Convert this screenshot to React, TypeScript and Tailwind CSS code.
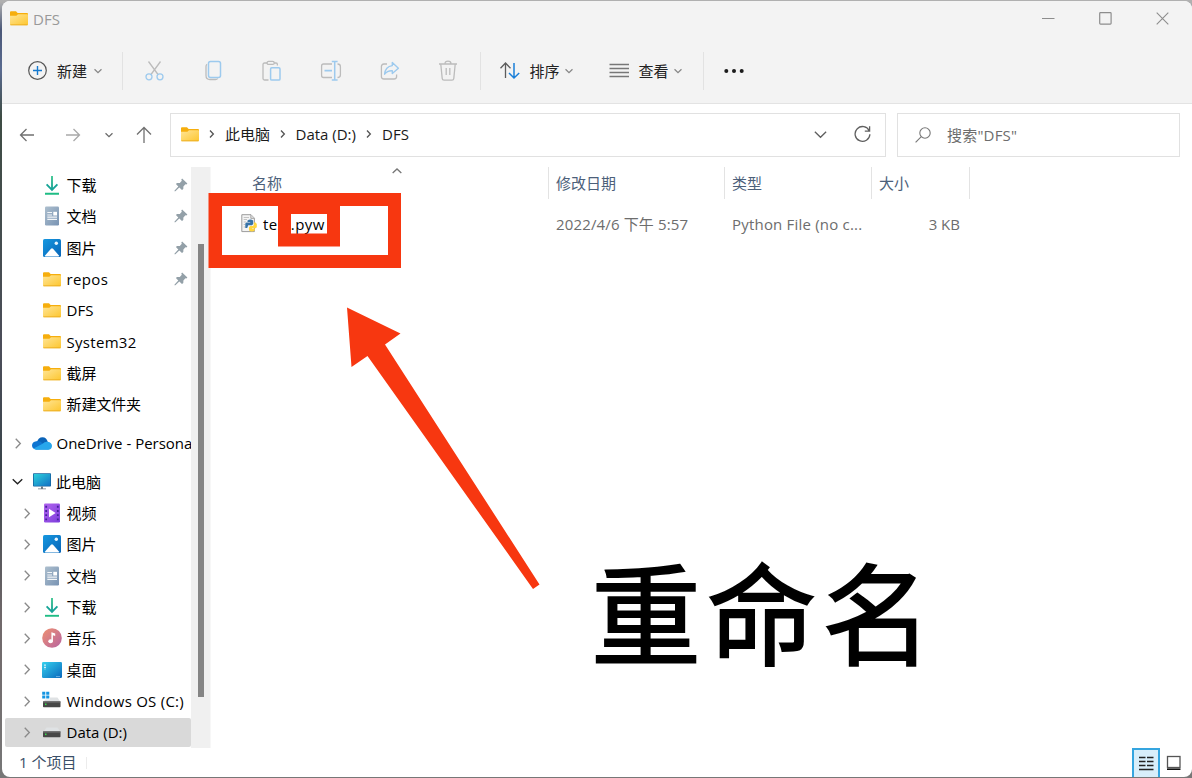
import { FC, PropsWithChildren, ReactElement, ReactNode } from "react";

type IconProps = Readonly<{ className?: string }>;

const FolderIcon: FC<IconProps> = ({ className }): ReactElement => (
  <svg className={className} width="18" height="15" viewBox="0 0 18 15">
    <defs>
      <linearGradient id="folder" x1="0" y1="0" x2="1" y2="1">
        <stop offset="0" stopColor="#ffe596" />
        <stop offset="1" stopColor="#fdc62f" />
      </linearGradient>
    </defs>
    <path d="M0 1.2Q0 .3 1 .3H6L7.6 2H17Q18 2 18 3V6H0Z" fill="#f6ae0d" />
    <path d="M0 4.8H6.4L8 3.2H17.2Q18 3.2 18 4V13.3Q18 14.2 17 14.2H1Q0 14.2 0 13.3Z" fill="url(#folder)" />
    <path d="M.4 13.8H17.6" stroke="#e9a91c" strokeWidth=".8" />
  </svg>
);

const DownloadIcon: FC = (): ReactElement => (
  <svg width="18" height="20" viewBox="0 0 18 20" fill="none" strokeWidth="1.9">
    <defs>
      <linearGradient id="down" x1="0" y1="0" x2="0" y2="1">
        <stop offset="0" stopColor="#35c48c" />
        <stop offset="1" stopColor="#109c91" />
      </linearGradient>
    </defs>
    <path d="M8.1 1H9.9V14H8.1Z" fill="url(#down)" />
    <path d="M3.6 9.4L9 14.8L14.4 9.4" stroke="#18a597" />
    <path d="M2 18.8H16" stroke="#1fbd85" />
  </svg>
);

const DocumentIcon: FC = (): ReactElement => (
  <svg width="18" height="20" viewBox="0 0 18 20">
    <defs>
      <linearGradient id="doc" x1="0" y1="0" x2="1" y2="1">
        <stop offset="0" stopColor="#adbfce" />
        <stop offset="1" stopColor="#7893b3" />
      </linearGradient>
    </defs>
    <rect x="2" y=".5" width="14" height="19" rx="1.2" fill="url(#doc)" />
    <path d="M4.3 6.5H9M4.3 9H9M4.3 11.2H14M4.3 13.3H14" stroke="#f3f6f9" strokeWidth="1.2" />
    <rect x="10.3" y="5.8" width="3.7" height="3.7" fill="#fff" />
  </svg>
);

const PictureIcon: FC = (): ReactElement => (
  <svg width="18" height="18" viewBox="0 0 18 18">
    <defs>
      <linearGradient id="pic" x1="0" y1="0" x2="1" y2="1">
        <stop offset="0" stopColor="#1698e0" />
        <stop offset="1" stopColor="#0864b7" />
      </linearGradient>
    </defs>
    <rect width="18" height="18" rx="1.6" fill="url(#pic)" />
    <path d="M1.6 17L8 9.8Q9 8.8 10 9.8L16.4 17Q16 17.4 15.5 17.4H2.5Q2 17.4 1.6 17Z" fill="#fff" />
    <circle cx="13.3" cy="4.3" r="1.7" fill="#e8f6ff" />
  </svg>
);

const VideoIcon: FC = (): ReactElement => (
  <svg width="18" height="20" viewBox="0 0 18 20">
    <defs>
      <linearGradient id="vid" x1="0" y1="0" x2="1" y2="1">
        <stop offset="0" stopColor="#b165ee" />
        <stop offset="1" stopColor="#7c3cdb" />
      </linearGradient>
    </defs>
    <rect x="1" y=".5" width="16" height="19" rx="1.2" fill="url(#vid)" />
    <path d="M3.2 2.8V18M14.8 2.8V18" stroke="#43209b" strokeWidth="1.8" strokeDasharray="1.9 2.3" />
    <path d="M6 5.8L12.6 10L6 14.2Z" fill="#fff" />
  </svg>
);

const MusicIcon: FC = (): ReactElement => (
  <svg width="20" height="20" viewBox="0 0 20 20">
    <defs>
      <linearGradient id="mus" x1="0" y1="0" x2="1" y2="1">
        <stop offset="0" stopColor="#ef9171" />
        <stop offset="1" stopColor="#b764a1" />
      </linearGradient>
    </defs>
    <circle cx="10" cy="10" r="9.8" fill="url(#mus)" />
    <ellipse cx="8.6" cy="13.2" rx="2.3" ry="2" fill="#fff" />
    <path d="M9.4 13.2V4.2L13.2 5.4V8L10.9 7.3V13.2Z" fill="#fff" />
  </svg>
);

const DesktopIcon: FC = (): ReactElement => (
  <svg width="20" height="16" viewBox="0 0 20 16">
    <defs>
      <linearGradient id="desk" x1="0" y1="0" x2="1" y2="1">
        <stop offset="0" stopColor="#35d1ee" />
        <stop offset="1" stopColor="#0a68bd" />
      </linearGradient>
    </defs>
    <rect width="20" height="16" rx="1.2" fill="url(#desk)" />
    <path d="M3 2.4V7.5" stroke="#fff" strokeWidth="1.5" strokeDasharray="1.4 1" />
    <path d="M14.5 14.6H18.5" stroke="#cbe9ff" strokeWidth="1" strokeDasharray="1 1" />
  </svg>
);

const ComputerIcon: FC = (): ReactElement => (
  <svg width="18" height="17" viewBox="0 0 18 17">
    <defs>
      <linearGradient id="comp" x1="0" y1="0" x2="1" y2="1">
        <stop offset="0" stopColor="#2cd0dc" />
        <stop offset="1" stopColor="#1171c5" />
      </linearGradient>
    </defs>
    <rect x="0" y=".3" width="18" height="13.2" rx=".8" fill="#15639f" />
    <rect x=".8" y="1" width="16.4" height="11.8" fill="url(#comp)" />
    <path d="M8 13.5H10V15.4H13V16.3H5V15.4H8Z" fill="#6c7984" />
  </svg>
);

const CloudIcon: FC = (): ReactElement => (
  <svg width="20" height="13" viewBox="0 0 20 13">
    <path d="M5 5Q6.3 .3 10.5 .3Q14.6 .4 15.8 5L12 9L4 12Z" fill="#0a63b8" />
    <path d="M4.3 4.3Q7.5 3.4 10.5 6.2L17 12.5H4.3Q0 12.2 0 8.3Q.3 4.8 4.3 4.3Z" fill="#0f75d1" />
    <path d="M10.6 6.8Q12.8 4.3 15.8 4.8Q20 5.5 20 9Q19.8 12.5 16.2 12.7H4.2Q2.6 12.6 1.6 11.6Z" fill="#27a6ec" />
  </svg>
);

const DriveIcon: FC<{ system?: boolean }> = ({ system }): ReactElement => (
  <svg className={system ? "mb-1" : "mb-[5px]"} width="20" height="17" viewBox="0 0 20 17">
    <path d="M4.5 6.5H15.5L18.5 11H1.5Z" fill="#dfe2e4" />
    <rect x="1" y="10.3" width="17.5" height="6" rx=".8" fill="#474747" />
    <rect x="1" y="10.3" width="17.5" height="1.2" fill="#777" />
    <rect x="3" y="12.6" width="1.5" height="1.5" fill="#39e04d" />
    {system && (
      <>
        <rect x="0" y="0" width="8" height="8.5" fill="#fff" />
        <path d="M.2 .8H3.3V3.8H.2ZM4.2 .8H7.3V3.8H4.2ZM.2 4.6H3.3V7.6H.2ZM4.2 4.6H7.3V7.6H4.2Z" fill="#1595e2" />
      </>
    )}
  </svg>
);

const PinIcon: FC = (): ReactElement => (
  <svg width="14" height="14" viewBox="0 0 14 14" fill="#93a0a8">
    <path d="M8.1 .5L13.4 5.5L12.4 6.5L11.4 6.2L9.4 8.5L9.3 11L8 12.1L5.3 9.5L1.4 13.2L.4 13.3L.6 12.4L4.3 8.5L1.9 6.1L3 4.9L5.8 4.9L7.8 2.8L7.3 1.5Z" />
  </svg>
);

const PythonFileIcon: FC = (): ReactElement => (
  <svg width="17" height="19" viewBox="0 0 17 19">
    <path d="M.8 .7H10L13.4 4.2V17.6H.8Z" fill="#f4f4f4" stroke="#9c9c9c" />
    <path d="M9.8 .8V4.4H13.3" fill="#ddd" stroke="#9c9c9c" strokeWidth=".8" />
    <path d="M2.7 3.5H8M2.7 5.5H6M2.7 8H5M2.7 10.5H4M2.7 13H4" stroke="#c3c3c3" />
    <path d="M6.5 6.5Q9.4 4.7 12.2 6.5V10L11 11.3H7.2L6.2 14H4.3V9.6L5.4 8.6H9.2V8H6.5Z" fill="#3673a8" />
    <path d="M12.9 8.6H14.6L15.8 10V13.2L14.6 14.2H11V14.8H13.8V16.6Q11 18.6 8 16.6V13.2L9.2 12H12L12.9 11Z" fill="#ffd640" />
  </svg>
);

const Chevron: FC<Readonly<{ dir: "right" | "down" | "up"; className?: string; size?: number }>> = ({ dir, className, size = 8 }): ReactElement => {
  const paths = { right: "M3 .8L8 6L3 11.2", down: "M.8 3.5L6 8.5L11.2 3.5", up: "M.8 8.5L6 3.5L11.2 8.5" };

  return (
    <svg className={className} width={size} height={size} viewBox="0 0 12 12" fill="none" stroke="currentColor" strokeWidth={16 / size}>
      <path d={paths[dir]} />
    </svg>
  );
};

const ToolIcon: FC<PropsWithChildren<IconProps>> = ({ className = "", children }): ReactElement => (
  <svg className={`shrink-0 ${className}`} width="22" height="22" viewBox="0 0 22 22" fill="none" stroke="#bcbcbc" strokeWidth="1.3">
    {children}
  </svg>
);

const BLUE = "#9dcaee";

type Row = Readonly<{ label: string; icon: ReactNode; pinned?: boolean; selected?: boolean; tracking?: string }>;

const quickAccess: Row[] = [
  { label: "下载", icon: <DownloadIcon />, pinned: true },
  { label: "文档", icon: <DocumentIcon />, pinned: true },
  { label: "图片", icon: <PictureIcon />, pinned: true },
  { label: "repos", icon: <FolderIcon />, pinned: true, tracking: "tracking-[0.35px]" },
  { label: "DFS", icon: <FolderIcon /> },
  { label: "System32", icon: <FolderIcon />, tracking: "tracking-[0.3px]" },
  { label: "截屏", icon: <FolderIcon /> },
  { label: "新建文件夹", icon: <FolderIcon />, tracking: "tracking-[-0.1px]" },
];

const computer: Row[] = [
  { label: "视频", icon: <VideoIcon /> },
  { label: "图片", icon: <PictureIcon /> },
  { label: "文档", icon: <DocumentIcon /> },
  { label: "下载", icon: <DownloadIcon /> },
  { label: "音乐", icon: <MusicIcon /> },
  { label: "桌面", icon: <DesktopIcon /> },
  { label: "Windows OS (C:)", icon: <DriveIcon system />, tracking: "tracking-[0.25px]" },
  { label: "Data (D:)", icon: <DriveIcon />, selected: true },
];

const SideRow: FC<Row & { expandable?: boolean }> = (props): ReactElement => (
  <div className="flex h-[31.33px] items-center py-[1.5px] pl-[3px]">
    <div className={`flex h-full w-[186px] items-center rounded-xs pl-[17px] ${props.selected ? "bg-[#d9d9d9]" : ""}`}>
      <span className="flex w-5 shrink-0 text-[#8a8a8a]">{props.expandable && <Chevron dir="right" size={11} />}</span>
      <span className="flex w-5 shrink-0 justify-center">{props.icon}</span>
      <span className={`ml-[4.5px] grow whitespace-nowrap ${props.tracking ?? ""}`}>{props.label}</span>
      {props.pinned && (
        <span className="mr-[3px]">
          <PinIcon />
        </span>
      )}
    </div>
  </div>
);

const TitleBar: FC = (): ReactElement => (
  <header className="flex h-[35px] items-center pr-[23px] pl-2">
    <FolderIcon />
    <span className="ml-[5px] text-[#999]">DFS</span>
    <div className="ml-auto flex items-center gap-11 text-[#8d8d8d]">
      <svg width="13" height="13" viewBox="0 0 13 13" stroke="currentColor">
        <path d="M0 6.5H12.5" />
      </svg>
      <svg width="13" height="13" viewBox="0 0 13 13" fill="none" stroke="currentColor" strokeWidth="1.2">
        <rect x=".7" y=".7" width="11.4" height="11.4" rx=".8" />
      </svg>
      <svg width="13" height="13" viewBox="0 0 13 13" stroke="currentColor" strokeWidth="1.1">
        <path d="M.7 .7L12.3 12.3M12.3 .7L.7 12.3" />
      </svg>
    </div>
  </header>
);

const Toolbar: FC = (): ReactElement => (
  <div className="flex h-[68px] items-center border-b border-[#e3e3e3] pt-[2px] pl-6">
    <ToolIcon>
      <circle cx="11.5" cy="10.5" r="8.8" stroke="#555" strokeWidth="1.2" />
      <path d="M7 10.5H16M11.5 6V15" stroke="#1479cf" strokeWidth="1.4" />
    </ToolIcon>
    <span className="ml-[9px] text-[#222]">新建</span>
    <Chevron className="ml-[7px] text-[#888]" dir="down" />
    <div className="ml-5 h-[38px] w-px bg-[#e2e2e2]" />
    <div className="ml-[21px] flex gap-[36.7px]">
      <ToolIcon>
        <path d="M4.5 1.5L14 14.5M16.5 1.5L7 14.5" />
        <circle cx="5" cy="16.8" r="3" stroke={BLUE} />
        <circle cx="16" cy="16.8" r="3" stroke={BLUE} />
      </ToolIcon>
      <ToolIcon>
        <path d="M4 4.3Q3 5 3 6.5V15.5Q3 19.5 7 19.5H12.5Q14 19.5 14.7 18.5" />
        <rect x="5.5" y="1.6" width="12" height="16" rx="2" stroke={BLUE} strokeWidth="1.5" />
      </ToolIcon>
      <ToolIcon>
        <path d="M6.5 3H3.5Q2 3 2 4.5V18.5Q2 20 3.5 20H7.5M13 3H15Q16.4 3 16.4 4.5V5.5" />
        <rect x="6" y="1.4" width="7.2" height="3" rx="1.5" />
        <rect x="9.6" y="7.8" width="9.4" height="12.3" rx="1.2" stroke={BLUE} strokeWidth="1.5" />
      </ToolIcon>
      <ToolIcon>
        <path d="M12 4H3.5Q1.6 4 1.6 6V15.5Q1.6 17.5 3.5 17.5H12M17.5 4Q20.4 4 20.4 6.5V15Q20.4 17.5 17.5 17.5" />
        <path d="M4.5 10.7H12" stroke={BLUE} strokeWidth="1.8" />
        <path d="M11.8 1.6H17.6M11.8 20H17.6M14.7 1.6V20" stroke={BLUE} strokeWidth="1.5" />
      </ToolIcon>
      <ToolIcon>
        <path d="M8 4H5Q2.4 4 2.4 6.5V16.5Q2.4 19 5 19H15Q17.6 19 17.6 16.5V14.5" />
        <path d="M13.3 2.5L19.4 8.2L13.3 13.6V10.7Q8.3 10.4 5.6 14.2Q6.3 6.5 13.3 5.6Z" stroke={BLUE} strokeWidth="1.4" strokeLinejoin="round" />
      </ToolIcon>
      <ToolIcon>
        <path d="M2 4H20M8 3.8Q8 1.2 11 1.2Q14 1.2 14 3.8M3.8 4.2L5.2 18.4Q5.4 20.2 7 20.2H15Q16.6 20.2 16.8 18.4L18.2 4.2M9.2 8V15M12.8 8V15" />
      </ToolIcon>
    </div>
    <div className="ml-[21px] h-[38px] w-px bg-[#e2e2e2]" />
    <ToolIcon className="ml-[18px]">
      <path d="M6.5 18V3M1.5 8.3L6.5 3L11.5 8.3" stroke="#5c5c5c" />
      <path d="M15 3V18M10 13L15 18L20.2 13" stroke="#1a7fd9" strokeWidth="1.5" />
    </ToolIcon>
    <span className="ml-2 text-[#222]">排序</span>
    <Chevron className="ml-1.5 text-[#888]" dir="down" />
    <ToolIcon className="ml-[35px]">
      <path d="M1.5 4.5H21M1.5 8.5H21M1.5 12.5H21M1.5 16.5H21" stroke="#777" strokeWidth="1.4" />
    </ToolIcon>
    <span className="ml-2 text-[#222]">查看</span>
    <Chevron className="ml-1.5 text-[#888]" dir="down" />
    <div className="ml-[21px] h-[38px] w-px bg-[#e2e2e2]" />
    <svg className="ml-5" width="20" height="6" viewBox="0 0 20 6" fill="#1b1b1b">
      <circle cx="2.3" cy="3" r="2" />
      <circle cx="10" cy="3" r="2" />
      <circle cx="17.7" cy="3" r="2" />
    </svg>
  </div>
);

const AddressBar: FC = (): ReactElement => (
  <nav className="flex h-[63px] items-center pr-[12px] pb-px pl-[17px]">
    <svg width="16" height="14" viewBox="0 0 16 14" fill="none" stroke="#707070" strokeWidth="1.3">
      <path d="M15 7H1.5M7.5 1L1.5 7L7.5 13" />
    </svg>
    <svg className="ml-[30px]" width="16" height="14" viewBox="0 0 16 14" fill="none" stroke="#a9a9a9" strokeWidth="1.3">
      <path d="M1 7H14.5M8.5 1L14.5 7L8.5 13" />
    </svg>
    <Chevron className="ml-6 text-[#6b6b6b]" dir="down" />
    <svg className="ml-[23px]" width="16" height="18" viewBox="0 0 16 18" fill="none" stroke="#707070" strokeWidth="1.3">
      <path d="M8 17V1.5M1 8.5L8 1.5L15 8.5" />
    </svg>
    <div className="ml-[18px] flex h-11 w-[716px] items-center border border-[#e1e1e1] pb-0.5 pl-2.5 text-[#1a1a1a]">
      <FolderIcon />
      <Chevron className="ml-[9px] text-[#555]" dir="right" />
      <span className="ml-[9px]">此电脑</span>
      <Chevron className="ml-[9px] text-[#555]" dir="right" />
      <span className="ml-[8.5px] w-[60.5px] whitespace-nowrap">Data (D:)</span>
      <Chevron className="ml-[9px] text-[#555]" dir="right" />
      <span className="ml-[9px]">DFS</span>
      <Chevron className="ml-auto text-[#606060]" dir="down" size={13} />
      <svg className="mr-3.5 ml-[27px]" width="17" height="18" viewBox="0 0 17 18" fill="none" stroke="#606060" strokeWidth="1.3">
        <path d="M15.3 6A7.4 7.4 0 1 0 15.9 9.2M15.6 1.3V6.2H10.8" />
      </svg>
    </div>
    <div className="ml-[11px] flex h-11 grow items-center border border-[#e1e1e1] pl-[17px] text-[#6d6d6d]">
      <svg width="16" height="16" viewBox="0 0 16 16" fill="none" stroke="#777" strokeWidth="1.1">
        <circle cx="10" cy="6" r="5.2" />
        <path d="M6.3 9.7L.6 15.4" />
      </svg>
      <span className="ml-4 tracking-[0.2px]">搜索"DFS"</span>
    </div>
  </nav>
);

const Sidebar: FC = (): ReactElement => (
  <aside className="flex w-[189px] shrink-0 flex-col gap-[7.9px] overflow-hidden pt-[2.4px] text-black">
    <div>
      {quickAccess.map((row) => (
        <SideRow key={row.label} {...row} />
      ))}
    </div>
    <div className="flex h-[31.33px] items-center pl-[11px] whitespace-nowrap">
      <Chevron className="shrink-0 text-[#8a8a8a]" dir="right" size={11} />
      <span className="ml-2 shrink-0">
        <CloudIcon />
      </span>
      <span className="ml-[4.5px]">OneDrive - Persona</span>
    </div>
    <div>
      <div className="flex h-[31.33px] items-center pl-2.5">
        <Chevron className="text-[#222]" dir="down" size={11} />
        <span className="ml-[10px]">
          <ComputerIcon />
        </span>
        <span className="ml-[5px]">此电脑</span>
      </div>
      {computer.map((row) => (
        <SideRow key={row.label} {...row} expandable />
      ))}
    </div>
  </aside>
);

const FileList: FC = (): ReactElement => (
  <section className="grow pl-0.5">
    <div className="flex h-[32px] text-[#4c607a]">
      <div className="flex w-[336px] items-center border-r border-[#e3e3e3] pl-[39px]">
        名称
        <Chevron className="mb-[25px] ml-[110px] text-[#777]" dir="up" size={10} />
      </div>
      <div className="flex w-44 items-center border-r border-[#e3e3e3] pl-[7px]">修改日期</div>
      <div className="flex w-[147px] items-center border-r border-[#e3e3e3] pl-[7px]">类型</div>
      <div className="flex w-[98px] items-center border-r border-[#e3e3e3] pl-[7px]">大小</div>
    </div>
    <div className="mt-[9px] flex h-[31px] items-center text-[#6d6d6d]">
      <div className="flex w-[336px] items-center pl-[28px] text-black">
        <PythonFileIcon />
        <span className="ml-[5px] tracking-[0.4px]">test.pyw</span>
      </div>
      <div className="w-44 pl-[7px] tracking-[0.15px]">2022/4/6 下午 5:57</div>
      <div className="w-[147px] pl-[7px] tracking-[0.2px]">Python File (no c...</div>
      <div className="w-[88px] text-right">3 KB</div>
    </div>
  </section>
);

const StatusBar: FC = (): ReactElement => (
  <footer className="flex h-[29px] items-center pl-[17px] text-[#3b4f68]">
    <span className="-mt-0.5">1 个项目</span>
    <div className="ml-2.5 h-3 w-px bg-[#ececec]" />
    <div className="ml-auto flex h-full w-7 items-center justify-center border-2 border-b-0 border-[#35a5df] bg-[#d8eefa]">
      <svg width="15" height="15" viewBox="0 0 15 15" stroke="#222" strokeWidth="1.3">
        <path d="M0 1.5H6.5M8 1.5H14.5M0 5.5H6.5M8 5.5H14.5M0 9.5H6.5M8 9.5H14.5M0 13.5H14.5" />
      </svg>
    </div>
    <svg className="mr-2.5 ml-1.5" width="16" height="16" viewBox="0 0 16 16" fill="none">
      <rect x="1.5" y="1.5" width="12.5" height="11" stroke="#555" strokeWidth="1.3" />
      <path d="M1 14.2H14.5" stroke="#111" strokeWidth="1.6" />
    </svg>
  </footer>
);

// Red frames, arrow and caption drawn over the window
const Annotations: FC = (): ReactElement => (
  <div className="pointer-events-none absolute inset-0">
    <svg className="absolute inset-0" width="1192" height="778" viewBox="0 0 1192 778" fill="#f73710">
      <path fillRule="evenodd" d="M208.5 193H401V268H208.5ZM222 206V255H388V206Z" />
      <path fillRule="evenodd" d="M278 205H340V246.5H278ZM291 214V233.5H327V214Z" />
      <path d="M347 307.5L400.5 333.5L385 344.5L539.5 584.5L533 589L367.5 356L351.5 367Z" />
    </svg>
    <p className="absolute top-[534px] left-[591px] text-[110px] leading-[160px] tracking-[5.5px] whitespace-nowrap text-black [-webkit-text-stroke:1.8px_black]">重命名</p>
  </div>
);

export default function App(): ReactElement {
  return (
    <div className="relative h-[778px] w-[1192px] overflow-hidden bg-[linear-gradient(#b0b0b0_2px,#4b5878_30px,#5a6b90_70px,#3e4c44_15%,#4c4e5a_45%,#39444a_60%,#71696b_80%,#777)] pt-px pb-px pl-0.5 font-['Open_Sans','Noto_Sans_CJK_SC',sans-serif] text-[15px] leading-5">
      <div className="flex h-full flex-col overflow-hidden rounded-lg bg-white">
        <div className="bg-[#f3f3f3]">
          <TitleBar />
          <Toolbar />
        </div>
        <AddressBar />
        <div className="flex h-[581px] shrink-0">
          <Sidebar />
          <div className="flex h-full w-[20px] shrink-0 justify-center border-r border-[#f7f7f7] bg-[#f0f0f0]">
            <div className="mt-[77px] h-[453px] w-1.5 bg-[#858585]" />
          </div>
          <FileList />
        </div>
        <StatusBar />
      </div>
      <Annotations />
    </div>
  );
}
